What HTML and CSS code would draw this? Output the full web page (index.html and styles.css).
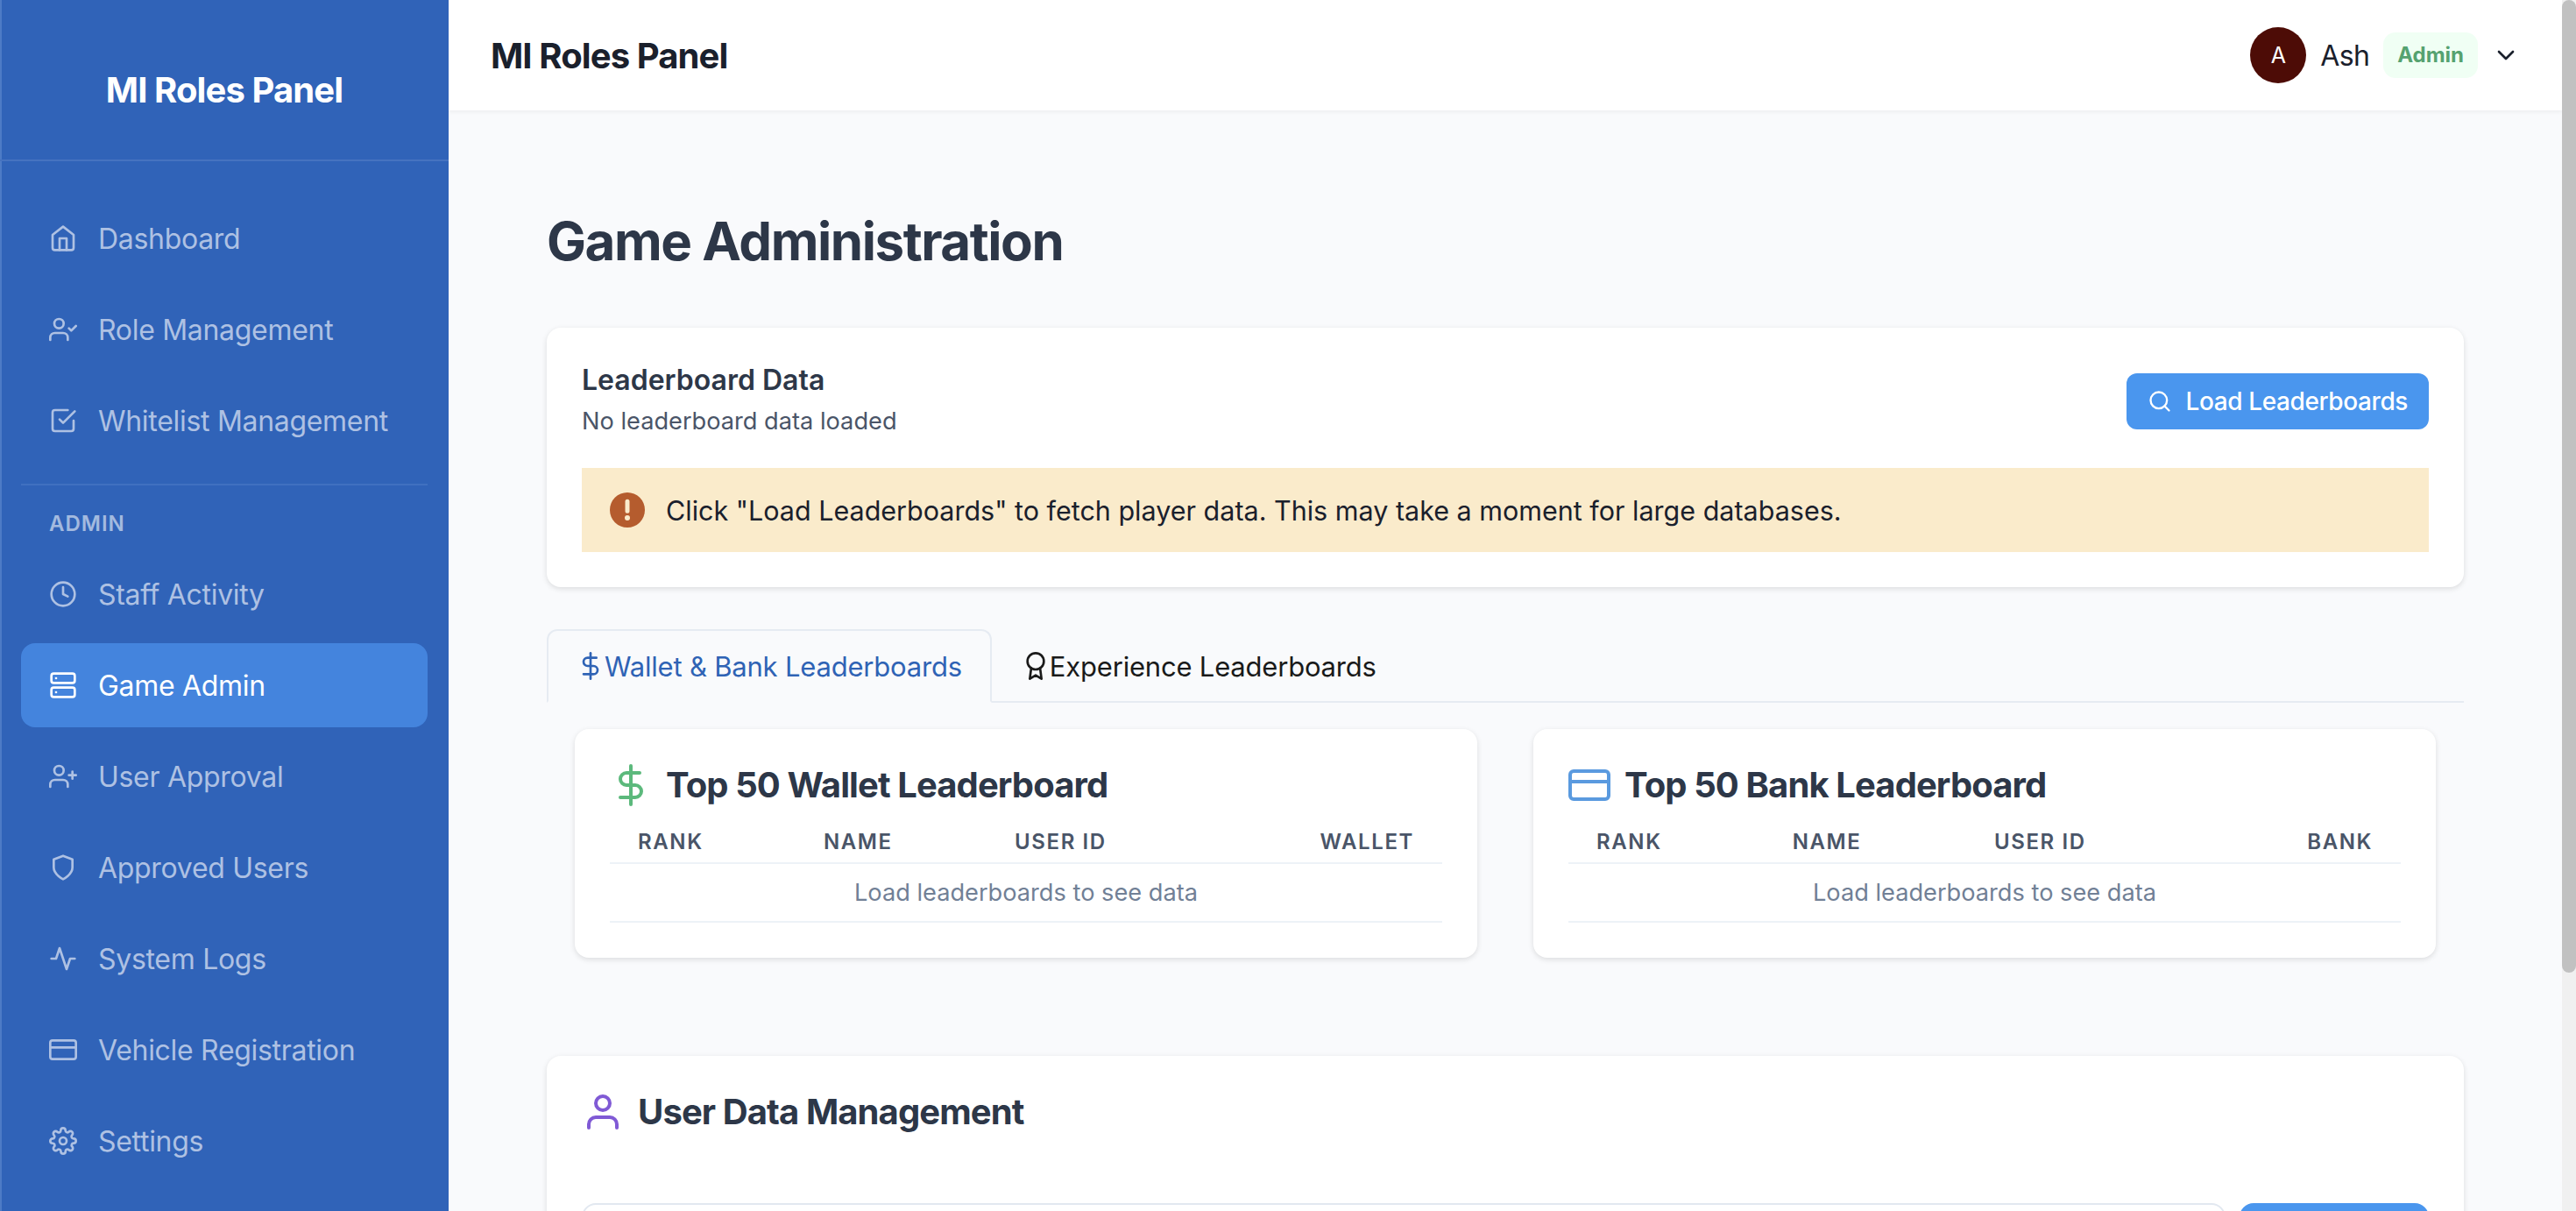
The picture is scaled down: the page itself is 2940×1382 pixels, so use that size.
FILE: index.html
```html
<!DOCTYPE html>
<html lang="en">
<head>
  <meta charset="UTF-8" />
  <title>MI Roles Panel</title>
  <link rel="stylesheet" href="styles.css">
</head>
<body>
  <div class="app">

    <!-- Sidebar -->
    <aside class="sidebar">
      <div class="brand">MI Roles Panel</div>
      <nav class="nav">
        <a class="nav-item">
          <svg class="nav-icon" viewBox="0 0 24 24"><path d="M3 9l9-7 9 7v11a2 2 0 0 1-2 2H5a2 2 0 0 1-2-2z"/><polyline points="9 22 9 12 15 12 15 22"/></svg>
          Dashboard
        </a>
        <a class="nav-item">
          <svg class="nav-icon" viewBox="0 0 24 24"><path d="M16 21v-2a4 4 0 0 0-4-4H5a4 4 0 0 0-4 4v2"/><circle cx="8.5" cy="7" r="4"/><polyline points="17 11 19 13 23 9"/></svg>
          Role Management
        </a>
        <a class="nav-item">
          <svg class="nav-icon" viewBox="0 0 24 24"><polyline points="9 11 12 14 22 4"/><path d="M21 12v7a2 2 0 0 1-2 2H5a2 2 0 0 1-2-2V5a2 2 0 0 1 2-2h11"/></svg>
          Whitelist Management
        </a>
        <div class="nav-divider"></div>
        <div class="nav-label">ADMIN</div>
        <a class="nav-item">
          <svg class="nav-icon" viewBox="0 0 24 24"><circle cx="12" cy="12" r="10"/><polyline points="12 6 12 12 16 14"/></svg>
          Staff Activity
        </a>
        <a class="nav-item active">
          <svg class="nav-icon" viewBox="0 0 24 24"><rect x="2" y="2" width="20" height="8" rx="2"/><rect x="2" y="14" width="20" height="8" rx="2"/><line x1="6" y1="6" x2="6.01" y2="6"/><line x1="6" y1="18" x2="6.01" y2="18"/></svg>
          Game Admin
        </a>
        <a class="nav-item">
          <svg class="nav-icon" viewBox="0 0 24 24"><path d="M16 21v-2a4 4 0 0 0-4-4H5a4 4 0 0 0-4 4v2"/><circle cx="8.5" cy="7" r="4"/><line x1="20" y1="8" x2="20" y2="14"/><line x1="23" y1="11" x2="17" y2="11"/></svg>
          User Approval
        </a>
        <a class="nav-item">
          <svg class="nav-icon" viewBox="0 0 24 24"><path d="M12 22s8-4 8-10V5l-8-3-8 3v7c0 6 8 10 8 10z"/></svg>
          Approved Users
        </a>
        <a class="nav-item">
          <svg class="nav-icon" viewBox="0 0 24 24"><polyline points="22 12 18 12 15 21 9 3 6 12 2 12"/></svg>
          System Logs
        </a>
        <a class="nav-item">
          <svg class="nav-icon" viewBox="0 0 24 24"><rect x="1" y="4" width="22" height="16" rx="2"/><line x1="1" y1="10" x2="23" y2="10"/></svg>
          Vehicle Registration
        </a>
        <a class="nav-item">
          <svg class="nav-icon" viewBox="0 0 24 24"><circle cx="12" cy="12" r="3"/><path d="M19.4 15a1.65 1.65 0 0 0 .33 1.82l.06.06a2 2 0 0 1 0 2.83 2 2 0 0 1-2.83 0l-.06-.06a1.65 1.65 0 0 0-1.82-.33 1.65 1.65 0 0 0-1 1.51V21a2 2 0 0 1-2 2 2 2 0 0 1-2-2v-.09A1.65 1.65 0 0 0 9 19.4a1.65 1.65 0 0 0-1.82.33l-.06.06a2 2 0 0 1-2.83 0 2 2 0 0 1 0-2.83l.06-.06a1.65 1.65 0 0 0 .33-1.82 1.65 1.65 0 0 0-1.51-1H3a2 2 0 0 1-2-2 2 2 0 0 1 2-2h.09A1.65 1.65 0 0 0 4.6 9a1.65 1.65 0 0 0-.33-1.82l-.06-.06a2 2 0 0 1 0-2.83 2 2 0 0 1 2.83 0l.06.06a1.65 1.65 0 0 0 1.82.33H9a1.65 1.65 0 0 0 1-1.51V3a2 2 0 0 1 2-2 2 2 0 0 1 2 2v.09a1.65 1.65 0 0 0 1 1.51 1.65 1.65 0 0 0 1.82-.33l.06-.06a2 2 0 0 1 2.83 0 2 2 0 0 1 0 2.83l-.06.06a1.65 1.65 0 0 0-.33 1.82V9a1.65 1.65 0 0 0 1.51 1H21a2 2 0 0 1 2 2 2 2 0 0 1-2 2h-.09a1.65 1.65 0 0 0-1.51 1z"/></svg>
          Settings
        </a>
      </nav>
    </aside>

    <!-- Scrolling column -->
    <div class="content">
      <header class="topbar">
        <div class="topbar-title">MI Roles Panel</div>
        <div class="user">
          <div class="avatar">A</div>
          <span class="user-name">Ash</span>
          <span class="badge">Admin</span>
          <svg class="chevron" viewBox="0 0 24 24"><polyline points="6 9 12 15 18 9"/></svg>
        </div>
      </header>

      <main class="main">
        <h1 class="page-title">Game Administration</h1>

        <!-- Leaderboard status -->
        <section class="card status-card">
          <div class="status-row">
            <div>
              <div class="status-title">Leaderboard Data</div>
              <div class="status-sub">No leaderboard data loaded</div>
            </div>
            <button class="btn">
              <svg class="btn-icon" viewBox="0 0 24 24"><circle cx="11" cy="11" r="8"/><line x1="21" y1="21" x2="16.65" y2="16.65"/></svg>
              Load Leaderboards
            </button>
          </div>
          <div class="alert">
            <svg class="alert-icon" viewBox="0 0 24 24"><path d="M12 0a12 12 0 1 0 12 12A12 12 0 0 0 12 0zm0 19.2a1.8 1.8 0 1 1 0-3.6 1.8 1.8 0 0 1 0 3.6zm1.5-6.4a1.5 1.5 0 0 1-3 0V6.2a1.5 1.5 0 0 1 3 0z"/></svg>
            Click "Load Leaderboards" to fetch player data. This may take a moment for large databases.
          </div>
        </section>

        <!-- Tabs -->
        <div class="tabs">
          <div class="tab selected">
            <svg class="tab-icon" viewBox="0 0 24 24"><line x1="12" y1="1" x2="12" y2="23"/><path d="M17 5H9.5a3.5 3.5 0 0 0 0 7h5a3.5 3.5 0 0 1 0 7H6"/></svg>
            Wallet &amp; Bank Leaderboards
          </div>
          <div class="tab">
            <svg class="tab-icon" viewBox="0 0 24 24"><circle cx="12" cy="8" r="7"/><polyline points="8.21 13.89 7 23 12 20 17 23 15.79 13.88"/></svg>
            Experience Leaderboards
          </div>
        </div>

        <div class="board-grid">
          <section class="card board">
            <h2 class="board-title">
              <svg class="title-icon green" viewBox="0 0 24 24"><line x1="12" y1="1" x2="12" y2="23"/><path d="M17 5H9.5a3.5 3.5 0 0 0 0 7h5a3.5 3.5 0 0 1 0 7H6"/></svg>
              Top 50 Wallet Leaderboard
            </h2>
            <table class="board-table">
              <thead>
                <tr><th>RANK</th><th>NAME</th><th>USER ID</th><th class="num">WALLET</th></tr>
              </thead>
              <tbody>
                <tr><td colspan="4">Load leaderboards to see data</td></tr>
              </tbody>
            </table>
          </section>
          <section class="card board">
            <h2 class="board-title">
              <svg class="title-icon blue" viewBox="0 0 24 24"><rect x="1" y="4" width="22" height="16" rx="2"/><line x1="1" y1="10" x2="23" y2="10"/></svg>
              Top 50 Bank Leaderboard
            </h2>
            <table class="board-table">
              <thead>
                <tr><th>RANK</th><th>NAME</th><th>USER ID</th><th class="num">BANK</th></tr>
              </thead>
              <tbody>
                <tr><td colspan="4">Load leaderboards to see data</td></tr>
              </tbody>
            </table>
          </section>
        </div>

        <!-- User data -->
        <section class="card user-card">
          <h2 class="board-title user-title">
            <svg class="title-icon purple" viewBox="0 0 24 24"><path d="M20 21v-2a4 4 0 0 0-4-4H8a4 4 0 0 0-4 4v2"/><circle cx="12" cy="7" r="4"/></svg>
            User Data Management
          </h2>
          <div class="search-row">
            <div class="search-input"></div>
            <div class="search-btn"></div>
          </div>
        </section>
      </main>
    </div>

    <!-- Drawn scrollbar, the headless browser hides the real one -->
    <div class="scroll-rail">
      <div class="scroll-thumb"></div>
    </div>

  </div>
</body>
</html>
```

FILE: styles.css
```css
* {
  box-sizing: border-box;
}
html,
body {
  height: 100%;
  margin: 0;
  overflow: hidden;
}
body {
  background-color: #f9fafc;
  color: #1a202c;
  font-family: "Inter", "Liberation Sans", sans-serif;
}
svg {
  fill: none;
  stroke: currentColor;
  stroke-width: 2;
  stroke-linecap: round;
  stroke-linejoin: round;
  flex-shrink: 0;
}
.app {
  display: flex;
  height: 100vh;
}

/* Sidebar */
.sidebar {
  width: 512px;
  flex-shrink: 0;
  background-color: #3063b8;
  border-left: 2px solid #4d7bc6;
  color: #aec1e3;
}
.brand {
  height: 184px;
  margin-left: -2px;
  padding-top: 22px;
  display: flex;
  align-items: center;
  justify-content: center;
  border-bottom: 2px solid #4673c0;
  color: #fff;
  font-size: 40px;
  font-weight: 650;
  letter-spacing: -0.9px;
}
.nav {
  margin-left: -2px;
  padding: 40px 24px 0;
  display: flex;
  flex-direction: column;
  gap: 8px;
}
.nav-item {
  height: 96px;
  padding: 0 32px;
  display: flex;
  align-items: center;
  gap: 24px;
  border-radius: 16px;
  font-size: 32px;
  letter-spacing: -0.3px;
}
.nav-icon {
  width: 32px;
  height: 32px;
}
.nav-item.active {
  background-color: #4484dd;
  color: #fff;
}
.nav-divider {
  height: 2px;
  margin-top: 16px;
  background-color: #4070c0;
}
.nav-label {
  padding: 18px 32px 6px;
  font-size: 24px;
  line-height: 36px;
  font-weight: 600;
  letter-spacing: 1px;
  color: #a3badf;
}

/* Scrolling column */
.content {
  flex: 1;
  min-width: 0;
  height: 100vh;
  overflow-y: auto;
  scrollbar-width: none;
}
.scroll-rail {
  width: 16px;
  flex-shrink: 0;
  background-color: #f0f0f0;
}
.scroll-thumb {
  height: 1110px;
  background-color: #c1c1c1;
  border-radius: 8px;
}
.topbar {
  height: 126px;
  padding: 0 48px;
  display: flex;
  align-items: center;
  justify-content: space-between;
  background-color: #fff;
  box-shadow: 0 2px 4px rgba(0, 0, 0, 0.05);
}
.topbar-title {
  font-size: 40px;
  font-weight: 650;
  letter-spacing: -0.9px;
}
.user {
  display: flex;
  align-items: center;
}
.avatar {
  width: 64px;
  height: 64px;
  border-radius: 50%;
  background-color: #4d0c06;
  color: #fff;
  font-size: 25px;
  display: flex;
  align-items: center;
  justify-content: center;
}
.user-name {
  margin-left: 16px;
  font-size: 32px;
  letter-spacing: -0.7px;
}
.badge {
  margin-left: 16px;
  padding: 0 16px;
  height: 52px;
  line-height: 52px;
  border-radius: 14px;
  background-color: #f0fff4;
  color: #55a270;
  font-size: 24px;
  font-weight: 700;
}
.chevron {
  width: 32px;
  height: 32px;
  margin-left: 16px;
}

.main {
  padding: 113px 112px 360px;
}
.page-title {
  margin: 0 0 63px;
  font-size: 60px;
  line-height: 72px;
  font-weight: 650;
  letter-spacing: -1.45px;
  color: #2d3748;
}
.card {
  background-color: #fff;
  border-radius: 16px;
  box-shadow: 0 2px 6px rgba(0, 0, 0, 0.12);
}

/* Leaderboard status */
.status-card {
  padding: 40px;
}
.status-row {
  display: flex;
  align-items: center;
  justify-content: space-between;
  margin-bottom: 34px;
}
.status-title {
  font-size: 32px;
  line-height: 40px;
  font-weight: 600;
  color: #2d3748;
}
.status-sub {
  margin-top: 8px;
  font-size: 27.2px;
  line-height: 38px;
  color: #4a5568;
}
.btn {
  height: 64px;
  margin-top: 1px;
  padding: 0 24px;
  display: flex;
  align-items: center;
  gap: 16px;
  border: 0;
  border-radius: 12px;
  background-color: #4a96ee;
  color: #fff;
  font-family: inherit;
  font-size: 28px;
  font-weight: 500;
  letter-spacing: -0.4px;
}
.btn-icon {
  width: 28px;
  height: 28px;
}
.alert {
  height: 96px;
  padding: 0 32px;
  display: flex;
  align-items: center;
  gap: 24px;
  background-color: #faebcb;
  font-size: 30.5px;
}
.alert-icon {
  width: 40px;
  height: 40px;
  fill: #b55c2e;
  stroke: none;
}

/* Tabs */
.tabs {
  display: flex;
  height: 84px;
  margin-top: 48px;
  border-bottom: 2px solid #e6ebf2;
}
.tab {
  height: 84px;
  padding: 0 32px;
  display: flex;
  align-items: center;
  font-size: 31px;
  letter-spacing: -0.2px;
  color: #1a1a1a;
  border: 2px solid transparent;
  border-radius: 12px 12px 0 0;
}
.tab.selected {
  color: #2f63b5;
  background-color: #f9fafc;
  border-color: #e6ebf2;
  border-bottom-color: #f9fafc;
}
.tab-icon {
  width: 32px;
  height: 32px;
}

.board-grid {
  display: grid;
  grid-template-columns: 1fr 1fr;
  gap: 64px;
  padding: 30px 32px 112px;
}
.board {
  padding: 40px;
}
.board-title {
  margin: 0 0 16px;
  display: flex;
  align-items: center;
  gap: 16px;
  font-size: 40px;
  line-height: 48px;
  font-weight: 650;
  letter-spacing: -0.9px;
  color: #2d3748;
}
.title-icon {
  width: 48px;
  height: 48px;
}
.title-icon.green {
  color: #5cb97c;
}
.title-icon.blue {
  color: #5a9adf;
}
.title-icon.purple {
  color: #805ad5;
}
.board-table {
  width: 100%;
  border-collapse: collapse;
}
.board-table th {
  padding: 13px 32px 11px;
  text-align: left;
  font-size: 24px;
  line-height: 24px;
  font-weight: 600;
  letter-spacing: 1.6px;
  color: #4a5568;
  border-bottom: 2px solid #edf2f7;
}
.board-table th.num {
  text-align: right;
}
.board-table td {
  padding: 16px 32px 15px;
  text-align: center;
  font-size: 27.2px;
  line-height: 34px;
  color: #718096;
  border-bottom: 2px solid #edf2f7;
}

/* User data */
.user-card {
  padding: 40px;
}
.user-title {
  margin-bottom: 80px;
}
.search-row {
  display: flex;
  gap: 16px;
}
.search-input {
  flex: 1;
  height: 64px;
  border: 2px solid #e2e8f0;
  border-radius: 16px;
}
.search-btn {
  width: 216px;
  height: 64px;
  border-radius: 16px;
  background-color: #4a96ee;
}
```
